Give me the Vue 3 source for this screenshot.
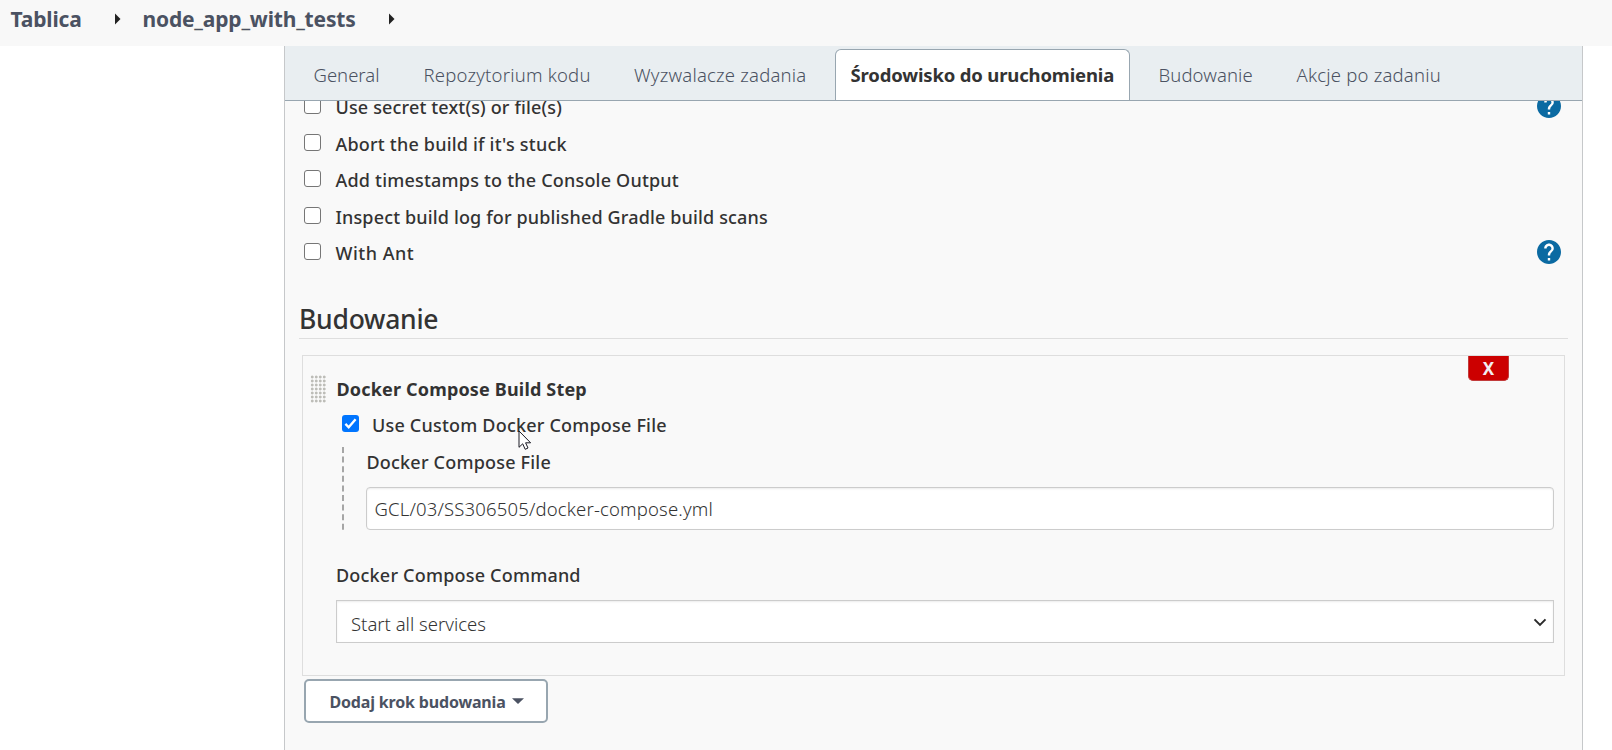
<script setup>
import { ref } from 'vue'

const tabs = [
  { label: 'General', cls: 'first-tab' },
  { label: 'Repozytorium kodu' },
  { label: 'Wyzwalacze zadania' },
  { label: 'Środowisko do uruchomienia', cls: 'active' },
  { label: 'Budowanie', cls: 'nudge' },
  { label: 'Akcje po zadaniu' },
]
const options = [
  { label: 'Use secret text(s) or file(s)', help: true, cls: 'tight' },
  { label: "Abort the build if it's stuck" },
  { label: 'Add timestamps to the Console Output' },
  { label: 'Inspect build log for published Gradle build scans', cls: 'tight' },
  { label: 'With Ant', help: true, cls: 'wide' },
]
const composeFile = ref('GCL/03/SS306505/docker-compose.yml')
</script>

<template>
  <div class="page">
    <header class="crumbs">
      <span class="crumb first">Tablica</span>
      <svg class="sep" width="6" height="12" viewBox="0 0 6 12"><path d="M0 0.5L5.5 6L0 11.5Z" fill="#222" /></svg>
      <span class="crumb second">node_app_with_tests</span>
      <svg class="sep" width="6" height="12" viewBox="0 0 6 12"><path d="M0 0.5L5.5 6L0 11.5Z" fill="#222" /></svg>
    </header>

    <main class="panel">
      <nav class="tabs">
        <a v-for="t in tabs" :key="t.label" class="tab" :class="t.cls">{{ t.label }}</a>
      </nav>

      <div class="content">
        <ul class="options">
          <li v-for="o in options" :key="o.label" class="option">
            <span class="box"></span>
            <span class="label" :class="o.cls">{{ o.label }}</span>
            <svg v-if="o.help" class="help" width="24" height="24" viewBox="2 2 20 20">
              <circle cx="12" cy="12" r="9" fill="#fff" />
              <path fill="#0b6aa2" d="M12 2C6.48 2 2 6.48 2 12s4.48 10 10 10 10-4.48 10-10S17.52 2 12 2zm1 17h-2v-2h2v2zm2.07-7.75l-.9.92C13.45 12.9 13 13.5 13 15h-2v-.5c0-1.1.45-2.1 1.17-2.83l1.24-1.26c.37-.36.59-.86.59-1.41 0-1.1-.9-2-2-2s-2 .9-2 2H8c0-2.21 1.79-4 4-4s4 1.79 4 4c0 .88-.36 1.68-.93 2.25z" />
            </svg>
          </li>
        </ul>

        <h2 class="heading">Budowanie</h2>

        <section class="step">
          <button class="remove">X</button>
          <div class="step-head">
            <span class="grip"></span>
            <b class="title">Docker Compose Build Step</b>
          </div>
          <div class="step-body">
            <div class="custom">
              <span class="box checked">
                <svg width="17" height="17" viewBox="0 0 16 16"><path d="M3.2 8.4L6.3 11.6L12.8 3.9" fill="none" stroke="#fff" stroke-width="2.2" /></svg>
              </span>
              <span class="label">Use Custom Docker Compose File</span>
              <svg class="cursor" width="14" height="21" viewBox="0 0 14 21">
                <path d="M1 1V17.3L4.7 13.8L7.2 19.3L10 18L7.6 12.8H12.6Z" fill="#fff" stroke="#1a1a24" stroke-width="1" />
              </svg>
            </div>
            <div class="nested">
              <svg class="dashes" width="2" height="83" viewBox="0 0 2 83"><path d="M1 0V83" stroke="#a6a6a6" stroke-width="2" stroke-dasharray="6 3.6" /></svg>
              <div class="field">
                <div class="label">Docker Compose File</div>
                <div class="input">{{ composeFile }}</div>
              </div>
            </div>
            <div class="label command">Docker Compose Command</div>
            <div class="select">
              <span>Start all services</span>
              <svg width="14" height="9" viewBox="0 0 14 9"><path d="M1.5 1.4L7 6.9L12.5 1.4" fill="none" stroke="#2b2b2b" stroke-width="2" /></svg>
            </div>
          </div>
        </section>

        <button class="add">
          <span>Dodaj krok budowania</span>
          <svg width="12" height="6" viewBox="0 0 12 6"><path d="M0 0.2H12L6 6Z" fill="#4b5262" /></svg>
        </button>
      </div>
    </main>
  </div>
</template>

<style>
body { margin: 0; background: #fff; overflow: hidden; }
</style>

<style scoped>
.page {
  width: 1612px; height: 750px; display: flex; flex-direction: column; overflow: hidden;
  font-family: "Noto Sans", "Open Sans", sans-serif; font-size: 18px; color: #333; box-sizing: border-box;
}
.page *, .page *::before { box-sizing: border-box; }
.crumbs { height: 46px; flex: none; background: #f8f8f8; display: flex; align-items: flex-start; padding-left: 10.5px; }
.crumb { font-size: 21px; font-weight: 700; line-height: 38px; color: #4b5262; white-space: nowrap; flex: none; }
.first { width: 104.5px; letter-spacing: -0.15px; }
.second { width: 246px; letter-spacing: -0.18px; }
.sep { margin-top: 13px; flex: none; }
.first + .sep { margin-right: 21.5px; }
.panel {
  margin-left: 284px; width: 1299px; flex: 1; min-height: 0; background: #f9f9f9; display: flex; flex-direction: column;
  border-left: 1px solid #c6c8ca; border-right: 1px solid #c6c8ca;
}
.tabs {
  height: 55px; flex: none; background: #e9eef1; border-bottom: 1px solid #98a6b0; padding: 3px 0 0 12px;
  display: grid; grid-template-columns: 110.5px 210.5px 217px 306.5px 139px 180px; justify-items: start;
}
.tab {
  height: 51px; padding: 0 15px; border: 1px solid transparent; border-bottom: 0; border-radius: 6px 6px 0 0;
  font-size: 18.5px; font-weight: 300; line-height: 49px; color: #4b5262; white-space: nowrap; letter-spacing: 0.2px;
}
.tab.first-tab { letter-spacing: 0; padding-left: 15.5px; }
.tab.nudge { padding-left: 16px; letter-spacing: 0.1px; }
.tab.active { width: 295px; padding-left: 14.5px; background: #fff; border-color: #98a6b0; font-weight: 700; color: #333; letter-spacing: -0.16px; }
.content { flex: 1; min-height: 0; overflow: hidden; padding: 0 14px; display: flex; flex-direction: column; align-items: stretch; }
.options { list-style: none; margin: -11.5px 0 0; padding: 0 7px 0 5px; flex: none; }
.option { height: 36.5px; display: flex; align-items: center; }
.box { width: 17px; height: 17px; flex: none; border: 1px solid #767676; border-radius: 3px; background: #fff; margin-bottom: 4px; }
.option .box { margin-right: 14.5px; }
.option .label { margin-bottom: 1px; }
.box.checked { border: 0; background: #0075ff; display: flex; align-items: center; justify-content: center; }
.label { font-weight: 500; line-height: 26px; letter-spacing: 0.2px; white-space: nowrap; }
.label.tight { letter-spacing: 0.15px; }
.label.wide { letter-spacing: 0.5px; }
.help { margin-left: auto; margin-bottom: 3px; flex: none; }
.heading {
  margin: 28px 0 16px; height: 39px; flex: none; border-bottom: 1px solid #dedede;
  font-size: 26.5px; font-weight: 500; line-height: 38px; letter-spacing: -0.25px;
}
.step { position: relative; height: 321px; flex: none; margin: 0 3px; border: 1px solid #dedede; padding: 15px 10px 0 7px; }
.remove {
  position: absolute; top: 0; right: 55px; width: 41px; height: 25px; padding: 0; border: 1px solid #c23b3b; border-top: 0; border-radius: 0 0 5px 5px;
  background: #c00; color: #f2eef2; font: 700 17px/25px "Noto Sans", sans-serif;
}
.step-head { display: flex; align-items: center; height: 36px; }
.grip {
  width: 16px; height: 28px; margin-right: 10.5px;
  background-image: radial-gradient(circle at 2.2px 2px, #b9b9b4 0, #c0c0bb 1.1px, transparent 1.8px); background-size: 4px 4px;
}
.title { font-size: 18px; font-weight: 700; letter-spacing: 0.17px; line-height: 26px; }
.step-body { padding-left: 26px; }
.custom { position: relative; height: 36px; display: flex; align-items: center; padding-left: 6px; }
.custom .box { margin-bottom: 3px; }
.custom .label { margin-left: 13px; }
.cursor { position: absolute; left: 182px; top: 23px; }
.nested { display: flex; margin-top: 4px; padding-left: 6px; height: 83px; }
.dashes { flex: none; margin-right: 22px; }
.field { flex: 1; display: flex; flex-direction: column; }
.field .label { height: 40px; line-height: 30px; padding-left: 0.5px; }
.input {
  height: 43px; border: 1px solid #ccc; border-radius: 4px; background: #fff; box-shadow: inset 0 1px 2px rgba(0, 0, 0, .08);
  padding-left: 7.5px; font-size: 18.5px; font-weight: 300; line-height: 41px; letter-spacing: 0.16px;
}
.command { margin-top: 30px; height: 40px; line-height: 30px; }
.select {
  height: 43px; border: 1px solid #ccc; background: #fff; box-shadow: inset 0 1px 2px rgba(0, 0, 0, .08);
  display: flex; align-items: center; justify-content: space-between; padding: 4px 6px 0 14px; font-size: 18.5px; font-weight: 300;
}
.select svg { margin-bottom: 3px; }
.add {
  align-self: flex-start; margin: 3px 0 0 5px; width: 244px; height: 44px; padding: 2px 0 0 23.5px; flex: none;
  border: 2px solid #98a6b0; border-radius: 5px; background: #fff; display: flex; align-items: center;
  color: #4b5262; font: 700 16px/38px "Noto Sans", sans-serif; letter-spacing: -0.17px; white-space: nowrap;
}
.add svg { margin: 0 0 3px 6.5px; }
</style>
